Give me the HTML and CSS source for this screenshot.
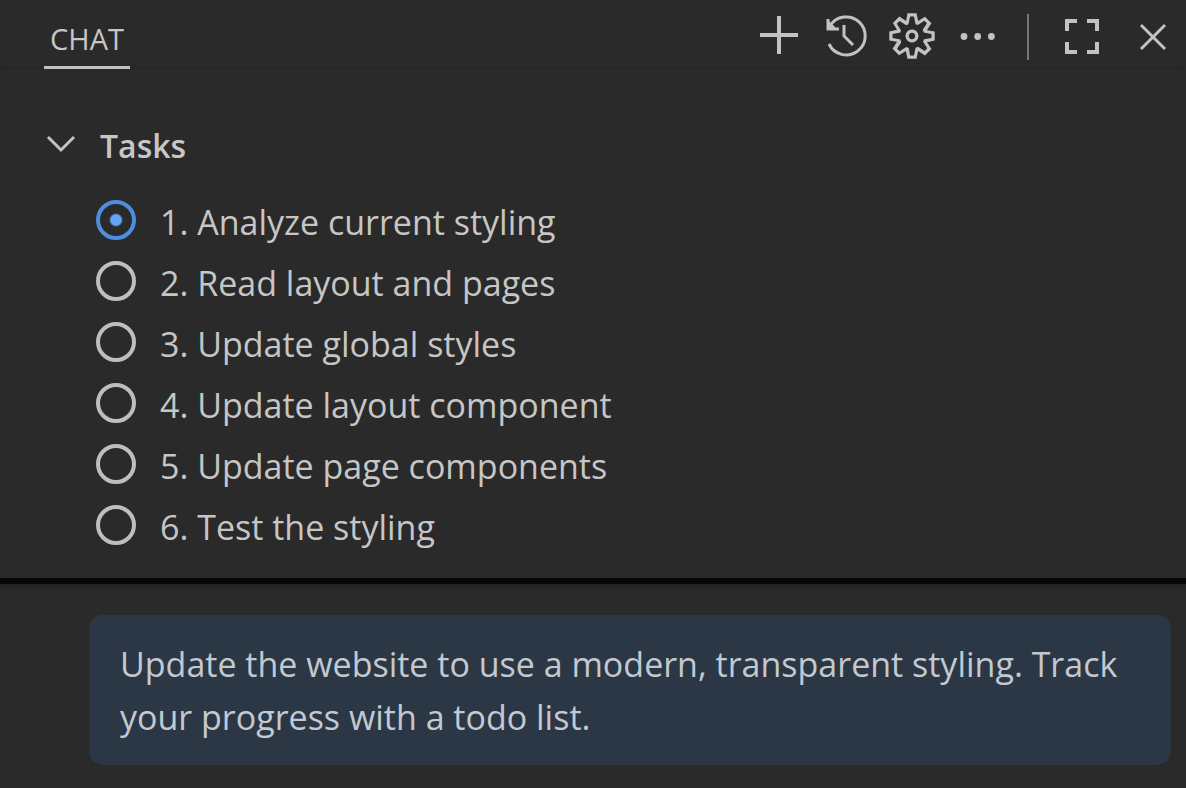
FILE: index.html
```html
<!DOCTYPE html>
<html lang="en">
<head>
<meta charset="utf-8">
<meta name="viewport" content="width=device-width, initial-scale=1">
<title>Chat</title>
<link rel="stylesheet" href="styles.css">
</head>
<body>
<header class="header">
  <h1 class="tab">CHAT</h1>
  <div class="actions">
    <button class="icon" type="button" aria-label="New chat"><svg viewBox="0 0 48 48"><path d="M4 23h38M23 4v38" stroke-width="4"/></svg></button>
    <button class="icon" type="button" aria-label="History"><svg viewBox="0 0 48 48"><path d="M7 32A19 19 0 1 0 8 14M6 7v10h11M22 13v11l9 9"/><path d="M6 8v9h9z" fill="#c2c2c2" stroke="none"/></svg></button>
    <button class="icon" type="button" aria-label="Settings"><svg class="solid" viewBox="0.6 0.6 14.8 14.8"><path fill-rule="evenodd" d="M9.1 4.4L8.6 2H7.4l-.5 2.4-.7.3-2-1.3-.9.8 1.3 2-.2.7-2.4.5v1.2l2.4.5.3.8-1.3 2 .8.8 2-1.3.8.3.4 2.3h1.2l.5-2.4.8-.3 2 1.3.8-.8-1.3-2 .3-.8 2.3-.4V7.4l-2.4-.5-.3-.8 1.3-2-.8-.8-2 1.3-.7-.2zM9.4 1l.5 2.4L12 2.1l2 2-1.4 2.1 2.4.4v2.8l-2.4.5L14 12l-2 2-2.1-1.4-.5 2.4H6.6l-.5-2.4L4 13.9l-2-2 1.4-2.1L1 9.4V6.6l2.4-.5L2.1 4l2-2 2.1 1.4.4-2.4h2.8zm.6 7c0 1.1-.9 2-2 2s-2-.9-2-2 .9-2 2-2 2 .9 2 2zM8 9c.6 0 1-.4 1-1s-.4-1-1-1-1 .4-1 1 .4 1 1 1z"/></svg></button>
    <button class="icon" type="button" aria-label="More actions"><svg class="solid" viewBox="0 0 48 48"><circle cx="10" cy="24.5" r="3.4"/><circle cx="23.7" cy="24.5" r="3.4"/><circle cx="37.4" cy="24.5" r="3.4"/></svg></button>
  </div>
  <div class="actions window">
    <button class="icon" type="button" aria-label="Maximize"><svg viewBox="0 0 48 48"><path d="M9 19V9h10M29 9h10v10M39 30v10H29M19 40H9V30" stroke-width="4"/></svg></button>
    <button class="icon" type="button" aria-label="Close"><svg viewBox="0 0 48 48"><path d="M11 13l24 24M35 13L11 37"/></svg></button>
  </div>
</header>
<section class="tasks">
  <button class="toggle" type="button" aria-expanded="true">
    <svg class="chevron" viewBox="0 0 32 32"><path d="M4 7l13 13L30 7"/></svg>
    <span>Tasks</span>
  </button>
  <div class="list" role="radiogroup" aria-label="Tasks">
    <label class="task"><input type="radio" name="task" checked><span>1. Analyze current styling</span></label>
    <label class="task"><input type="radio" name="task"><span>2. Read layout and pages</span></label>
    <label class="task"><input type="radio" name="task"><span>3. Update global styles</span></label>
    <label class="task"><input type="radio" name="task"><span>4. Update layout component</span></label>
    <label class="task"><input type="radio" name="task"><span>5. Update page components</span></label>
    <label class="task"><input type="radio" name="task"><span>6. Test the styling</span></label>
  </div>
</section>
<main class="conversation">
  <p class="message">Update the website to use a modern, transparent styling. Track your progress with a todo list.</p>
</main>
</body>
</html>
```
FILE: styles.css
```css
* {
  box-sizing: border-box;
}

body {
  margin: 0;
  min-height: 100vh;
  background: #2a2a2a;
  color: #c6c6c6;
  font-family: "Open Sans", "Noto Sans", sans-serif;
  font-size: 34px;
}

button {
  padding: 0;
  border: 0;
  background: none;
  color: inherit;
  font: inherit;
  cursor: pointer;
}

svg {
  display: block;
  width: 100%;
  height: 100%;
  fill: none;
  stroke: #c2c2c2;
  stroke-width: 3;
}

.solid {
  fill: #c2c2c2;
  stroke: none;
}

.header {
  display: flex;
  align-items: flex-start;
  padding: 12px 8px 0 44px;
}

.tab {
  margin: 0 auto 0 0;
  padding: 0 6px;
  border-bottom: 3px solid #c2c2c2;
  font-size: 29px;
  font-weight: 400;
  line-height: 54px;
}

.actions {
  display: flex;
  gap: 18px;
}

.icon {
  width: 48px;
  height: 48px;
}

.window {
  gap: 24px;
  margin-left: 25px;
}

.window::before {
  width: 2px;
  height: 46px;
  margin: 2px 5px 0 0;
  background: #777;
  content: "";
}

.tasks {
  padding: 47px 44px 20px;
  border-bottom: 6px solid #070707;
  box-shadow: 0 2px 6px #1c1c1c;
}

.toggle {
  display: flex;
  align-items: center;
  gap: 24px;
  font-size: 32px;
  font-weight: 600;
  line-height: 60px;
}

.chevron {
  width: 32px;
  height: 32px;
}

.list {
  display: flex;
  flex-direction: column;
  padding: 16px 0 0 52px;
}

.task {
  display: flex;
  align-items: flex-start;
  gap: 24px;
  line-height: 61px;
}

.task input {
  flex: none;
  width: 40px;
  height: 40px;
  margin: 8px 0 0;
  border: 4px solid #bebebe;
  border-radius: 50%;
  appearance: none;
}

.task input:checked {
  border-color: #4f8de0;
  background: radial-gradient(circle, #62a5f7 5px, transparent 7px);
}

.conversation {
  padding: 31px 15px 23px 89px;
}

.message {
  margin: 0;
  padding: 23px 31px 21px;
  border-radius: 14px;
  background: #2c3745;
  color: #c3c9d0;
  line-height: 53px;
}
```
